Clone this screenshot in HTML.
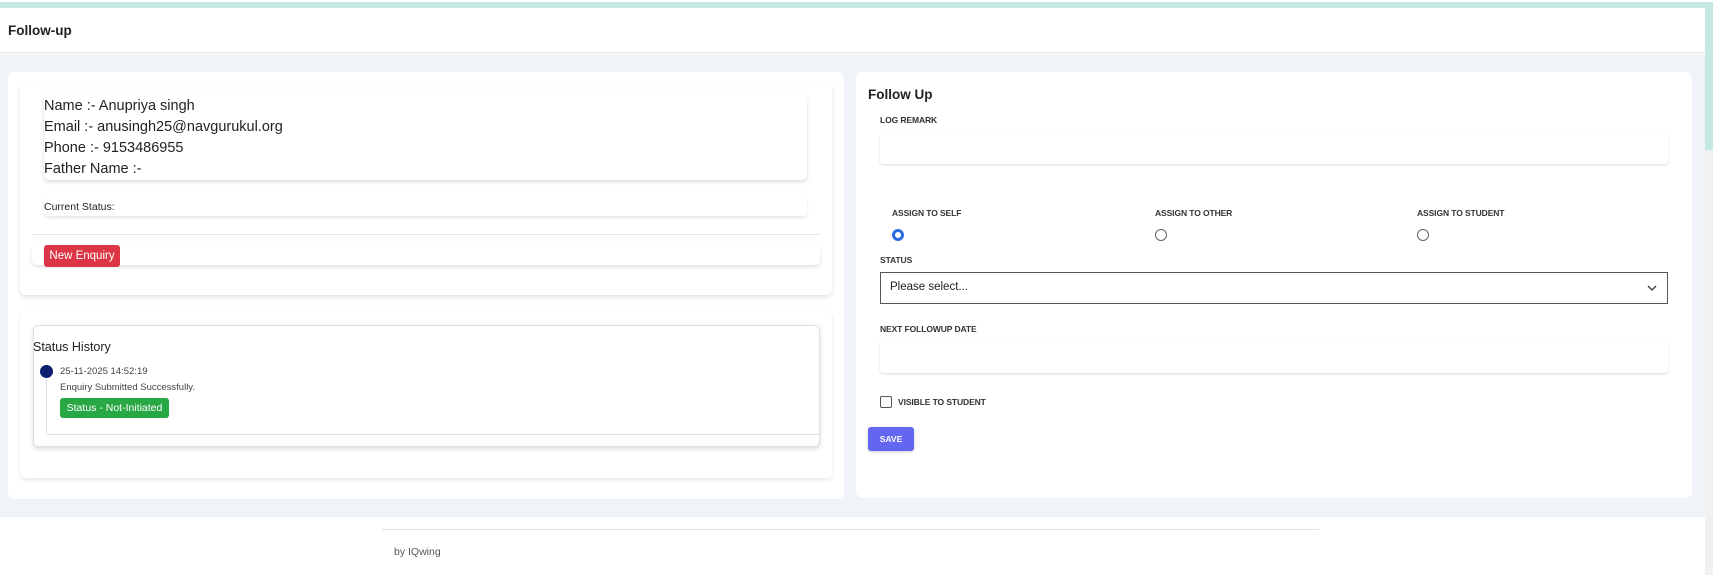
<!DOCTYPE html>
<html><head><meta charset="utf-8"><style>
*{box-sizing:border-box;margin:0;padding:0}
body{width:1713px;height:575px;position:relative;background:#fff;font-family:"Liberation Sans",Arial,sans-serif;color:#222;overflow:hidden}
.a{position:absolute}
.lbl{position:absolute;font-size:8.5px;font-weight:bold;color:#333;letter-spacing:-0.1px}
.inp{position:absolute;background:#fff;box-shadow:0 1px 2px rgba(0,0,0,.15);border-radius:3px}
.radio{position:absolute;width:12px;height:12px;border:1px solid #666;border-radius:50%;background:#fff}
</style></head><body>
<div class="a" style="left:0;top:2px;width:1705px;height:6px;background:#c5e9e1"></div>
<div class="a" style="left:1705px;top:2px;width:8px;height:148px;background:#c5e9e1"></div>
<div class="a" style="left:1705px;top:150px;width:8px;height:425px;background:#f1f1f1"></div>
<div class="a" style="left:0;top:8px;width:1705px;height:45px;background:#fff;border-bottom:1px solid #e3e6ea"></div>
<div class="a" style="left:8px;top:23px;font-size:13.5px;font-weight:bold;color:#222">Follow-up</div>
<div class="a" style="left:0;top:54px;width:1705px;height:463px;background:#f0f3f8"></div>

<!-- left card -->
<div class="a" style="left:8px;top:72px;width:836px;height:427px;background:#fff;border-radius:7px"></div>
<div class="a" style="left:20px;top:83px;width:812px;height:212px;background:#fff;border-radius:6px;box-shadow:0 2px 5px rgba(0,0,0,.12)"></div>
<div class="a" style="left:44px;top:95px;width:763px;height:85px;background:#fff;border-radius:5px;box-shadow:0 2px 4px rgba(0,0,0,.14)"></div>
<div class="a" style="left:44px;top:96px;font-size:14.5px;line-height:21px;color:#222">Name :- Anupriya singh<br>Email :- anusingh25@navgurukul.org<br>Phone :- 9153486955<br>Father Name :-</div>
<div class="a" style="left:44px;top:196px;width:763px;height:20px;background:#fff;border-radius:5px;box-shadow:0 2px 3px rgba(0,0,0,.1)"></div>
<div class="a" style="left:44px;top:201px;font-size:10.5px;color:#222">Current Status:</div>
<div class="a" style="left:32px;top:234px;width:788px;height:1px;background:#e3e6ee"></div>
<div class="a" style="left:32px;top:245px;width:788px;height:20px;background:#fff;border-radius:5px;box-shadow:0 2px 4px rgba(0,0,0,.12)"></div>
<div class="a" style="left:44px;top:245px;width:76px;height:22px;background:#dc3545;border-radius:3px;color:#fff;font-size:11.5px;line-height:22px;text-align:center">New Enquiry</div>

<div class="a" style="left:20px;top:312px;width:812px;height:166px;background:#fff;border-radius:6px;box-shadow:0 2px 5px rgba(0,0,0,.1)"></div>
<div class="a" style="left:33px;top:325px;width:787px;height:122px;background:#fff;border:1px solid #dcdfe4;border-radius:5px;box-shadow:0 2px 5px rgba(0,0,0,.15)"></div>
<div class="a" style="left:33px;top:340px;font-size:12.5px;color:#222">Status History</div>
<div class="a" style="left:40px;top:365px;width:13px;height:13px;border-radius:50%;background:#0d1f6e"></div>
<div class="a" style="left:46px;top:378px;width:1px;height:57px;background:#ddd"></div>
<div class="a" style="left:48px;top:434px;width:772px;height:1px;background:#ddd"></div>
<div class="a" style="left:60px;top:366px;font-size:9.5px;color:#444">25-11-2025 14:52:19</div>
<div class="a" style="left:60px;top:382px;font-size:9.5px;color:#444">Enquiry Submitted Successfully.</div>
<div class="a" style="left:60px;top:398px;width:109px;height:20px;background:#28a745;border-radius:3px;color:#fff;font-size:10.5px;line-height:20px;text-align:center">Status - Not-Initiated</div>

<!-- right card -->
<div class="a" style="left:856px;top:72px;width:836px;height:426px;background:#fff;border-radius:7px"></div>
<div class="a" style="left:868px;top:87px;font-size:13.5px;font-weight:bold;color:#222">Follow Up</div>
<div class="lbl" style="left:880px;top:115px">LOG REMARK</div>
<div class="inp" style="left:880px;top:133px;width:788px;height:31px"></div>
<div class="lbl" style="left:892px;top:208px">ASSIGN TO SELF</div>
<div class="lbl" style="left:1155px;top:208px">ASSIGN TO OTHER</div>
<div class="lbl" style="left:1417px;top:208px">ASSIGN TO STUDENT</div>
<div class="radio" style="left:892px;top:229px;border:3px solid #2d6be4"></div>
<div class="radio" style="left:1155px;top:229px"></div>
<div class="radio" style="left:1417px;top:229px"></div>
<div class="lbl" style="left:880px;top:255px">STATUS</div>
<div class="a" style="left:880px;top:272px;width:788px;height:32px;border:1px solid #555;background:#fff"></div>
<div class="a" style="left:890px;top:281px;font-size:11.5px;color:#222">Please select...</div>
<svg class="a" style="left:1647px;top:284px" width="10" height="8" viewBox="0 0 10 8"><path d="M1 2 L5 6 L9 2" fill="none" stroke="#333" stroke-width="1.3"/></svg>
<div class="lbl" style="left:880px;top:324px">NEXT FOLLOWUP DATE</div>
<div class="inp" style="left:880px;top:340px;width:788px;height:33px"></div>
<div class="a" style="left:880px;top:396px;width:12px;height:12px;border:1px solid #555;border-radius:2px"></div>
<div class="lbl" style="left:898px;top:397px">VISIBLE TO STUDENT</div>
<div class="a" style="left:868px;top:427px;width:46px;height:24px;background:#6366f1;border-radius:3px;color:#fff;font-size:8.5px;font-weight:bold;line-height:24px;text-align:center;box-shadow:0 1px 3px rgba(0,0,0,.2)">SAVE</div>

<!-- footer -->
<div class="a" style="left:382px;top:529px;width:937px;height:1px;background:#dde1e8"></div>
<div class="a" style="left:394px;top:546px;font-size:10.5px;color:#555">by IQwing</div>
</body></html>
